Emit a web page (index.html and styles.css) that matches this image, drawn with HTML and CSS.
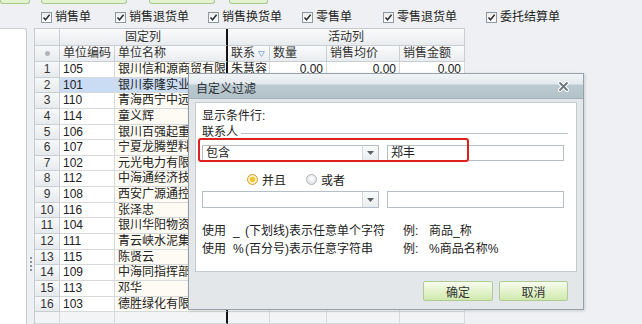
FILE: index.html
```html
<!DOCTYPE html>
<html lang="zh-CN">
<head>
    <meta charset="UTF-8">
    <title>自定义过滤</title>
    <link rel="stylesheet" href="styles.css">
</head>
<body>
    <div class="strip">
        <div class="tb tb-1"></div>
        <div class="tb tb-2"></div>
        <div class="tb tb-3"></div>
        <div class="tb tb-4"></div>
    </div>

    <div class="filters" id="filters"></div>

    <div class="main">
        <div class="side"></div>
        <div class="splitter"><i></i><i></i><i></i><i></i></div>
        <div class="grid" id="grid"></div>
    </div>

    <div class="dialog">
        <div class="dlg-title">
            <span>自定义过滤</span>
            <svg class="dlg-close" width="11" height="11" viewBox="0 0 11 11">
                <path d="M2 2L9 9M9 2L2 9" stroke="#fff" stroke-width="4" stroke-linecap="round"/>
                <path d="M2 2L9 9M9 2L2 9" stroke="#6e777e" stroke-width="1.8" stroke-linecap="round"/>
            </svg>
        </div>
        <div class="dlg-body">
            <div class="panel">
                <div class="caption">显示条件行:</div>
                <div class="group"><span>联系人</span><i class="rule"></i></div>
                <div class="cond-row">
                    <div class="combo"><span class="val">包含</span><span class="drop"><svg width="7" height="4" viewBox="0 0 7 4"><path d="M0 0H7L3.5 4Z" fill="#5b6166"/></svg></span></div>
                    <div class="input">郑丰</div>
                </div>
                <div class="radios">
                    <label class="opt"><i class="radio on"></i>并且</label>
                    <label class="opt"><i class="radio"></i>或者</label>
                </div>
                <div class="cond-row tall">
                    <div class="combo"><span class="val"></span><span class="drop"><svg width="7" height="4" viewBox="0 0 7 4"><path d="M0 0H7L3.5 4Z" fill="#5b6166"/></svg></span></div>
                    <div class="input"></div>
                </div>
                <div class="hints">
                    <div><span class="w">使用</span><span class="s">_</span>(下划线)表示任意单个字符</div>
                    <div><span class="e">例:</span>商品_称</div>
                    <div><span class="w">使用</span><span class="s">%</span>(百分号)表示任意字符串</div>
                    <div><span class="e">例:</span>%商品名称%</div>
                </div>
                <div class="mark"></div>
            </div>
            <div class="dlg-foot">
                <button class="btn btn-ok">确定</button>
                <button class="btn btn-cancel">取消</button>
            </div>
        </div>
    </div>

    <script>
        const filters = ['销售单', '销售退货单', '销售换货单', '零售单', '零售退货单', '委托结算单'];
        const tick = '<svg width="9" height="9" viewBox="0 0 9 9"><path d="M1.5 4.5L3.5 6.8L7.6 1.8" fill="none" stroke="#2b2f33" stroke-width="1.5"/></svg>';
        document.getElementById('filters').innerHTML = filters.map((f) => `
            <label class="chk"><span class="box">${tick}</span>${f}</label>
        `).join('');

        const rows = [
            ['105', '银川信和源商贸有限公司', '朱慧容', '0.00', '0.00', '0.00'],
            ['101', '银川泰隆实业公司'],
            ['110', '青海西宁中远商贸公司'],
            ['114', '童义辉'],
            ['106', '银川百强起重机械公司'],
            ['107', '宁夏龙腾塑料有限公司'],
            ['102', '元光电力有限公司'],
            ['112', '中海通经济技术公司'],
            ['108', '西安广源通控制设备'],
            ['116', '张泽忠'],
            ['104', '银川华阳物资公司'],
            ['111', '青云峡水泥集团'],
            ['115', '陈贤云'],
            ['109', '中海同指挥部'],
            ['113', '邓华'],
            ['103', '德胜绿化有限公司']
        ];

        const filterIcon = '<svg class="funnel" width="7" height="6" viewBox="0 0 7 6"><path d="M0.5 0.5H6.5L3.5 5.5Z" fill="none" stroke="#8fb2dd"/></svg>';
        let html = `
            <div class="c h"></div>
            <div class="c h center fx" style="grid-column: span 2">固定列</div>
            <div class="c h center" style="grid-column: span 4">活动列</div>
            <div class="c h num"><i class="dot"></i></div>
            <div class="c h">单位编码</div>
            <div class="c h fx">单位名称</div>
            <div class="c h">联系 ${filterIcon}</div>
            <div class="c h">数量</div>
            <div class="c h">销售均价</div>
            <div class="c h">销售金额</div>
        `;
        rows.forEach((r, i) => {
            const sel = i === 1 ? ' sel' : '';
            html += `
                <div class="c num">${i + 1}</div>
                <div class="c${sel}">${r[0]}</div>
                <div class="c nm fx${sel}">${r[1]}</div>
                <div class="c">${r[2] || ''}</div>
                <div class="c r">${r[3] || ''}</div>
                <div class="c r">${r[4] || ''}</div>
                <div class="c r">${r[5] || ''}</div>
            `;
        });
        html += '<div class="c ft"></div><div class="c ft"></div><div class="c ft fx"></div><div class="c ft"></div><div class="c ft"></div><div class="c ft"></div><div class="c ft"></div>';
        document.getElementById('grid').innerHTML = html;
    </script>
</body>
</html>
```

FILE: styles.css
```css
body {
    margin: 0;
    width: 642px;
    height: 324px;
    overflow: hidden;
    position: relative;
    font-family: "Liberation Sans", "Noto Sans CJK SC", sans-serif;
    font-size: 12px;
    color: #222;
    background-color: #eef0f3;
}

/* toolbar buttons cut off at the top edge */
.strip {
    display: flex;
    height: 4px;
}

.tb {
    height: 3px;
    border: 1px solid #a9c98c;
    border-top: none;
    border-radius: 0 0 3px 3px;
    background-color: #e3f2cf;
}

.tb-1 { width: 28px; }
.tb-2 { width: 84px; margin-left: 11px; }
.tb-3 { width: 64px; margin-left: 22px; }
.tb-4 { width: 37px; margin-left: 14px; }

/* bill type checkboxes */
.filters {
    display: grid;
    grid-template-columns: 74px 93px 94px 81px 103px auto;
    height: 14px;
    margin-top: 6px;
    padding-left: 41px;
    align-items: center;
}

.chk {
    display: flex;
    align-items: center;
    gap: 3px;
    line-height: 14px;
    color: #1e1e1e;
}

.box {
    width: 9px;
    height: 9px;
    border: 1px solid #8e979d;
    background: linear-gradient(#ececec, #fff);
    display: flex;
}

/* main area */
.main {
    display: flex;
    height: 296px;
    margin-top: 4px;
}

.side {
    width: 26px;
    background-color: #fff;
    border: 1px solid #c8ced4;
    border-left: none;
    border-bottom: none;
    border-radius: 0 3px 0 0;
}

.splitter {
    width: 7px;
    box-sizing: border-box;
    padding-top: 229px;
    display: flex;
    flex-direction: column;
    align-items: center;
    gap: 2px;
}

.splitter i {
    width: 2px;
    height: 2px;
    background-color: #8b959c;
}

.grid {
    display: grid;
    grid-template-columns: 25px 55px 113px 42px 57px 73px 65px;
    grid-template-rows: 17px 16px repeat(16, 15.65px) 12px;
    border-top: 1px solid #c4cad0;
    border-left: 1px solid #c4cad0;
    align-self: flex-start;
}

.c {
    box-sizing: border-box;
    border-right: 1px solid #d6dadd;
    border-bottom: 1px solid #d6dadd;
    padding: 0 3px;
    line-height: 15px;
    white-space: nowrap;
    overflow: hidden;
    background-color: #fff;
}

.h {
    background: linear-gradient(#fbfbfc, #e9ecef);
    border-color: #c9ced3;
    color: #333;
}

.center {
    text-align: center;
    line-height: 16px;
}

.num {
    padding: 0;
    text-align: center;
    background: linear-gradient(#f7f8f9, #e7eaed);
    border-color: #c9ced3;
    color: #333;
}

.dot {
    display: inline-block;
    width: 5px;
    height: 5px;
    border-radius: 50%;
    background-color: #b0b6bb;
    vertical-align: 1px;
}

.funnel {
    vertical-align: 0;
}

.fx {
    border-right: 2px solid #141414;
}

.r {
    text-align: right;
}

.nm {
    background-color: #fdfbf3;
}

.sel {
    background-color: #c9dcf3;
}

.ft {
    background-color: #f2f4f6;
}

/* custom filter dialog */
.dialog {
    position: absolute;
    left: 188px;
    top: 73px;
    width: 396px;
    height: 237px;
    box-sizing: border-box;
    border: 1px solid #94a1aa;
    background-color: #e4e7ea;
    box-shadow: 1px 1px 3px rgba(0, 0, 0, 0.15);
    display: flex;
    flex-direction: column;
}

.dlg-title {
    flex: none;
    height: 24px;
    padding: 0 14px 0 7px;
    display: flex;
    align-items: center;
    justify-content: space-between;
    background: linear-gradient(#f1f5f7 0, #e2e9ed 10px, #bccad1 11px, #b3c1c9 100%);
    border-bottom: 1px solid #a3b0b8;
    color: #2d3236;
}

.dlg-title span {
    padding-top: 3px;
}

.dlg-body {
    flex: 1;
    padding: 3px 6px 0;
    display: flex;
    flex-direction: column;
}

.panel {
    position: relative;
    height: 170px;
    box-sizing: border-box;
    padding: 5px 12px 0 6px;
    border: 1px solid #c3cad0;
    background-color: #fff;
}

.caption {
    line-height: 16px;
}

.group {
    display: flex;
    align-items: center;
    line-height: 16px;
    margin-right: -4px;
}

.rule {
    flex: 1;
    height: 1px;
    margin: 3px 0 0 3px;
    background-color: #b9c0c6;
}

.cond-row {
    display: flex;
    gap: 8px;
    height: 16px;
    margin-top: 5px;
}

.cond-row.tall {
    height: 17px;
    margin-top: 4px;
}

.combo {
    width: 177px;
    box-sizing: border-box;
    border: 1px solid #b6bec5;
    background-color: #fff;
    display: flex;
}

.val {
    flex: 1;
    padding-left: 3px;
    line-height: 14px;
}

.drop {
    width: 15px;
    border-left: 1px solid #d2d7db;
    background: linear-gradient(#fafbfb, #eaedef);
    display: flex;
    align-items: center;
    justify-content: center;
}

.input {
    width: 177px;
    box-sizing: border-box;
    border: 1px solid #b6bec5;
    padding-left: 3px;
    line-height: 14px;
    background-color: #fff;
}

.radios {
    display: flex;
    align-items: center;
    gap: 20px;
    height: 16px;
    margin-top: 10px;
    padding-left: 45px;
}

.opt {
    display: flex;
    align-items: center;
    gap: 4px;
}

.radio {
    width: 11px;
    height: 11px;
    box-sizing: border-box;
    border-radius: 50%;
    border: 1px solid #a9b0b6;
    background: radial-gradient(circle at 50% 40%, #fff, #d8dde1);
}

.radio.on {
    border-color: #d59c2f;
    background: radial-gradient(circle, #f7c531 0 2.4px, #fff6d2 3.2px, #f3e0a6 100%);
}

.hints {
    display: grid;
    grid-template-columns: 201px auto;
    margin-top: 14px;
    line-height: 18px;
}

.w {
    display: inline-block;
    width: 31px;
}

.s {
    display: inline-block;
    width: 12px;
}

.e {
    display: inline-block;
    width: 26px;
}

.mark {
    position: absolute;
    left: 2px;
    top: 35px;
    width: 271px;
    height: 24px;
    box-sizing: border-box;
    border: 2px solid #e0201c;
    border-radius: 3px;
}

.dlg-foot {
    display: flex;
    justify-content: flex-end;
    gap: 6px;
    padding: 9px 9px 0 0;
}

.btn {
    height: 20px;
    padding: 0;
    font-family: inherit;
    font-size: 12px;
    color: #333;
    border: 1px solid #aecb92;
    border-radius: 2px;
    background: linear-gradient(#f8fcf1, #e3f2cc 50%, #d0e9ae);
}

.btn-ok { width: 70px; }
.btn-cancel { width: 69px; }
```
